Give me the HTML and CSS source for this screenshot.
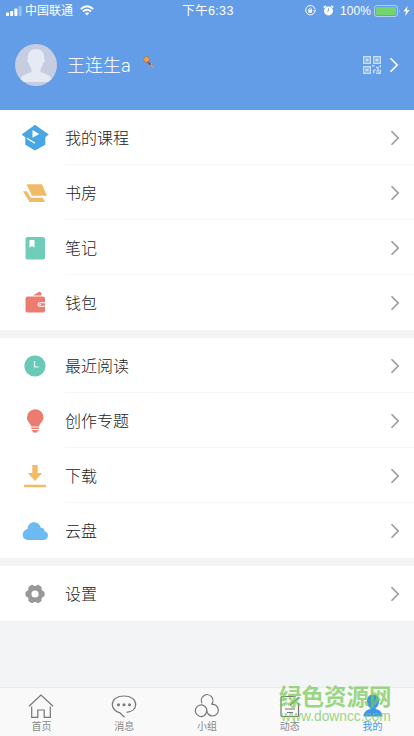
FILE: index.html
```html
<!DOCTYPE html>
<html lang="zh-CN">
<head>
<meta charset="utf-8">
<title>我的</title>
<link rel="stylesheet" href="styles.css">
</head>
<body>
<svg width="0" height="0" class="defs"><symbol id="chev" viewBox="0 0 10 16"><path d="M1.5 1.3 8.2 8 1.5 14.7" fill="none" stroke="currentColor" stroke-width="1.6"/></symbol></svg>
<div class="app">
  <header class="header">
    <div class="status">
      <div class="status-left">
        <svg width="17" height="12" viewBox="0 0 17 12" fill="#fff"><rect x="0" y="7.5" width="3" height="3.5" rx=".7"/><rect x="4.2" y="6" width="3" height="5" rx=".7"/><rect x="8.4" y="3.5" width="3" height="7.5" rx=".7"/><rect x="12.6" y="1" width="3" height="10" rx=".7" opacity=".35"/></svg>
        <span class="carrier">中国联通</span>
        <svg width="14" height="11" viewBox="0 0 14 11" fill="none" stroke="#fff" stroke-width="1.9"><path d="M.8 4Q7-1.6 13.2 4M3 6.5Q7 3 11 6.5"/><path d="M4.8 8.2Q7 6.5 9.2 8.2L7 10.6Z" fill="#fff" stroke="none"/></svg>
      </div>
      <span class="time">下午6:33</span>
      <div class="status-right">
        <svg width="11" height="11" viewBox="0 0 11 11" fill="none" stroke="#fff"><path d="M9.8 6.8A4.7 4.7 0 1 1 10 4.2M8.5 5 10 6.6 11 4.7"/><rect x="3.3" y="4.7" width="3.8" height="3" fill="#fff" stroke="none"/><path d="M4 5V3.8Q5.2 2 6.4 3.8V5" stroke-width=".8"/></svg>
        <svg class="alarm" width="11" height="11" viewBox="0 0 11 11"><circle cx="5.5" cy="5.9" r="4.5" fill="#fff"/><path d="M.8 2.7 2.8.9M10.2 2.7 8.2.9" stroke="#fff" stroke-width="1.6"/><path d="M5.5 3.2V6.1H3.8" fill="none" stroke="#639de7" stroke-width=".8"/></svg>
        <span class="pct">100%</span>
        <svg width="27" height="12" viewBox="0 0 27 12"><rect x=".5" y=".5" width="23" height="11" rx="2.5" fill="none" stroke="#fff" stroke-opacity=".5"/><rect x="2" y="2" width="20" height="8" rx="1" fill="#73d36c"/><path d="M25 4Q26.5 6 25 8Z" fill="#fff" fill-opacity=".5"/></svg>
        <svg width="7" height="10" viewBox="0 0 7 10"><path d="M4.4 0 .5 5.5H3L2.2 10 6.5 4H4Z" fill="#fff"/></svg>
      </div>
    </div>
    <div class="profile">
      <svg class="avatar" width="42" height="42" viewBox="0 0 42 42"><defs><clipPath id="round"><circle cx="21" cy="21" r="21"/></clipPath></defs><g clip-path="url(#round)"><path d="M0 0H42V42H0Z" fill="#c7cde0"/><path d="M21 5C15 5 12.5 8.5 13 14.5C11.8 14.8 12.3 19 14 19.5Q14.8 23 16.5 25V28Q5 31 4 38H38Q37 31 25.5 28V25Q27.2 23 28 19.5C29.7 19 30.2 14.8 29 14.5C29.5 8.5 27 5 21 5Z" fill="#e6eaf4"/></g></svg>
      <span class="name">王连生a</span>
      <svg class="medal" width="12" height="12" viewBox="0 0 12 12"><path d="M4 5 9 10.5" stroke="#8e5961" stroke-width="2.4"/><path d="M6 9.5 11 10.8M8.5 7 9 11.8" stroke="#b4b285" stroke-width="1"/><circle cx="3.5" cy="3.4" r="2.8" fill="#f5a341" stroke="#a46c51" stroke-width=".7"/></svg>
      <svg class="qr" width="18" height="18" viewBox="0 0 18 18" fill="none" stroke="#c9def8" stroke-width="1.4"><path d="M.7.7H7.3V7.3H.7ZM10.7.7H17.3V7.3H10.7ZM.7 10.7H7.3V17.3H.7ZM3 3.2H5V4.8H3ZM13 3.2H15V4.8H13ZM3 13.2H5V14.8H3ZM9 9.8H11.5M17.3 9V11.5M17.3 13.5V17.3H13M10.7 14V17.3M10.7 14H12.5M13.5 15H15V11.5H13"/></svg>
      <svg class="head-arrow" width="10" height="16"><use href="#chev"/></svg>
    </div>
  </header>
  <main>
    <section class="group">
      <a class="row"><svg class="icon" viewBox="0 0 30 30"><path d="M15 1.8 28.8 11.6 25.3 14.3V21.8L15 27.6 5.3 21.8V14.3L1.6 11.6Z" fill="#48a6e3"/><path d="M12.5 7 19.2 10.9 12.5 14.8Z" fill="#fff"/><path d="M7 15.2 15 20.2" stroke="#fff" stroke-width="1.3"/></svg><span class="label">我的课程</span><svg class="arrow"><use href="#chev"/></svg></a>
      <a class="row"><svg class="icon" viewBox="0 0 30 30" fill="#f0ba68"><path d="M6.5 6.3H22L27 17.8H12Z"/><path d="M3 13.3H6.9L10.8 19.8H22.8L25 24H9.5Z"/></svg><span class="label">书房</span><svg class="arrow"><use href="#chev"/></svg></a>
      <a class="row"><svg class="icon" viewBox="0 0 30 30"><rect x="5.5" y="4" width="19.5" height="22.5" rx="2" fill="#70cdba"/><path d="M9.5 7H14.5V14.8L12 13 9.5 14.8Z" fill="#fff"/></svg><span class="label">笔记</span><svg class="arrow"><use href="#chev"/></svg></a>
      <a class="row"><svg class="icon" viewBox="0 0 30 30"><path d="M12.8 7.6 18.8 3.9Q20.3 3.4 21.3 5.2V7.6Z" fill="#ec7c70"/><rect x="5.5" y="8.5" width="19.5" height="16" rx="2" fill="#ec7c70"/><path d="M25.5 14.7H20Q18 14.7 18 16.5T20 18.3H25.5" fill="none" stroke="#fff" stroke-width="1.1"/><circle cx="20.2" cy="16.5" r=".8" fill="#fff"/></svg><span class="label">钱包</span><svg class="arrow"><use href="#chev"/></svg></a>
    </section>
    <section class="group">
      <a class="row"><svg class="icon" viewBox="0 0 30 30"><circle cx="15" cy="15" r="10.6" fill="#69c8b6"/><path d="M14.5 10V15.8H18.7" fill="none" stroke="#dcf5ef" stroke-width="1.3"/></svg><span class="label">最近阅读</span><svg class="arrow"><use href="#chev"/></svg></a>
      <a class="row"><svg class="icon" viewBox="0 0 30 30" fill="#ec7c70"><path d="M15 3.2A8.3 8.3 0 0 0 6.9 11.5C6.9 15.5 10.5 17 11.2 20.5H19C19.6 17 23.5 15.5 23.5 11.5A8.3 8.3 0 0 0 15 3.2Z"/><path d="M11.3 21.5H19V23H11.3ZM11.7 24H18.6V25.3H17.3V26.5H13V25.3H11.7Z"/></svg><span class="label">创作专题</span><svg class="arrow"><use href="#chev"/></svg></a>
      <a class="row"><svg class="icon" viewBox="0 0 30 30" fill="#f2bc65"><path d="M12.3 4H17.7V12H22.2L15 20 7.8 12H12.3ZM4 23.8H26V26.3H4Z"/></svg><span class="label">下载</span><svg class="arrow"><use href="#chev"/></svg></a>
      <a class="row"><svg class="icon" viewBox="0 0 30 30"><path d="M8 24Q2.7 23.5 2.7 18.5 3 14 7.5 13C8 8.5 10.5 6.2 14 6.2S20 8.5 20.8 11.8Q24.5 12 24.8 15.5 28 16 28 19.8 27.5 24 23 24Z" fill="#6bbaf1"/></svg><span class="label">云盘</span><svg class="arrow"><use href="#chev"/></svg></a>
    </section>
    <section class="group">
      <a class="row"><svg class="icon" viewBox="0 0 30 30"><g fill="#989898"><circle cx="15" cy="15" r="8.2"/><rect x="12" y="5.4" width="6" height="19.2" rx="2" transform="rotate(30 15 15)"/><rect x="12" y="5.4" width="6" height="19.2" rx="2" transform="rotate(90 15 15)"/><rect x="12" y="5.4" width="6" height="19.2" rx="2" transform="rotate(150 15 15)"/></g><circle cx="15" cy="15" r="3.6" fill="#fff"/></svg><span class="label">设置</span><svg class="arrow"><use href="#chev"/></svg></a>
    </section>
  </main>
  <nav class="tabs">
    <a class="tab"><svg viewBox="0 0 26 26"><path d="M1 13.3 13 2 25 13.3M3.7 13.5V24.3H9.8V17H16.2V24.3H22.3V13.5"/></svg><span>首页</span></a>
    <a class="tab"><svg viewBox="0 0 26 26"><path d="M15.5 19.4C21 18.8 24.7 15.7 24.7 11.5 24.7 6.5 20 3 13 3S1.3 6.5 1.3 11.5 6 19.2 9 19.8L13.5 24.2"/><g fill="#767676" stroke="none"><circle cx="7.5" cy="11.8" r="1.5"/><circle cx="13" cy="11.8" r="1.5"/><circle cx="18.5" cy="11.8" r="1.5"/></g></svg><span>消息</span></a>
    <a class="tab"><svg viewBox="0 0 26 26"><path d="M8 10.2A5.8 5.8 0 1 1 17.5 11.3M12.8 16.5A5.8 5.8 0 1 0 10 22.8Q13 20.5 12.8 16.5A5.8 5.8 0 1 0 17.5 11.5"/></svg><span>小组</span></a>
    <a class="tab"><svg viewBox="0 0 26 26"><path d="M21.5 10V22.5Q21.5 23.5 20.5 23.5H5Q4 23.5 4 22.5V4.5Q4 3.5 5 3.5H18.5M13 12.5 22 4M8 16H18M10 19.5H16"/></svg><span>动态</span></a>
    <a class="tab active"><svg viewBox="0 0 26 26"><path d="M13 1.5C8.8 1.5 7 4.5 7 8.5 7 11.5 8.3 13.8 10.3 15V16C6 17 3.5 19.5 3.5 23.5H22.5C22.5 19.5 20 17 15.7 16V15C17.7 13.8 19 11.5 19 8.5 19 4.5 17.2 1.5 13 1.5Z"/></svg><span>我的</span></a>
  </nav>
  <div class="watermark"><strong>绿色资源网</strong><span>www.downcc.com</span></div>
</div>
</body>
</html>
```
FILE: styles.css
```css
* { box-sizing: border-box; }
body { margin: 0; font-family: "Liberation Sans", "Noto Sans CJK SC", sans-serif; }
.defs { position: absolute; }
svg { display: block; flex: none; }
.app { position: relative; width: 414px; height: 736px; display: flex; flex-direction: column; background: #f3f4f6; overflow: hidden; }
.header { height: 110px; background: #639de7; color: #fff; flex: none; }
.status { height: 20px; display: grid; grid-template-columns: 1fr auto 1fr; align-items: center; padding: 0 4px 0 6px; font-size: 12px; line-height: 20px; }
.status-left, .status-right { display: flex; align-items: center; }
.status-right { justify-content: flex-end; }
.carrier { margin: 1px 7px 0 2px; }
.time { margin-top: 1px; font-size: 12.5px; letter-spacing: .35px; }
.alarm { margin-left: 7px; }
.pct { margin: 1px 3px 0 6px; font-size: 12px; letter-spacing: .1px; }
.status-right svg:last-child { margin-left: 2px; }
.profile { height: 90px; display: flex; align-items: center; padding: 0 15px 0 15px; }
.name { margin: 2px 0 0 10px; font-size: 18px; font-family: Roboto, "Noto Sans CJK SC", sans-serif; font-weight: 300; line-height: 26px; }
.medal { margin: -6px 0 0 12px; }
.qr { margin-left: auto; }
.head-arrow { margin-left: 8px; }
.group { background: #fff; margin-bottom: 8px; }
.row { height: 55px; display: flex; align-items: center; padding: 0 14px 0 20px; position: relative; }
.row:not(:last-child)::after { content: ""; position: absolute; left: 65px; right: 0; bottom: 0; height: 1px; background: #f7f7f7; }
.icon { width: 30px; height: 30px; }
.label { margin: -2px 0 0 15px; font-family: "Noto Sans CJK SC", sans-serif; font-size: 16px; font-weight: 300; line-height: 24px; color: #222; }
.arrow { width: 10px; height: 16px; margin-left: auto; color: #999; }
.tabs { height: 49px; margin-top: auto; display: grid; grid-template-columns: repeat(5, 1fr); background: #f9f9f9; border-top: 1px solid #ececee; }
.tab { display: flex; flex-direction: column; align-items: center; padding-top: 5px; font-size: 10px; line-height: 14px; color: #888; }
.tab svg { width: 26px; height: 26px; fill: none; stroke: #767676; stroke-width: 1.2; }
.tab span { margin-top: 1px; }
.tab.active { color: #3e96ec; }
.tab.active svg { fill: #3e96ec; stroke: none; }
.watermark { position: absolute; left: 279px; top: 681px; display: flex; flex-direction: column; color: #76c957; opacity: .72; white-space: nowrap; }
.watermark strong { font-family: "Noto Sans CJK SC", sans-serif; font-size: 22.5px; line-height: 28px; font-weight: 700; }
.watermark span { margin-left: 2px; font-size: 13.8px; line-height: 16px; }
```
